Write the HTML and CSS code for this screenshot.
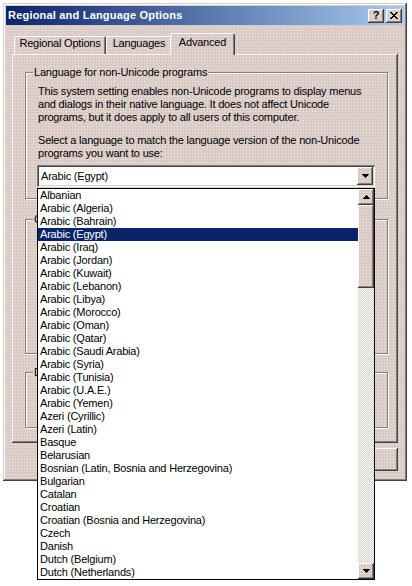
FILE: index.html
```html
<!DOCTYPE html>
<html>
<head>
<meta charset="utf-8">
<title>Regional and Language Options</title>
<link rel="stylesheet" href="styles.css">
</head>
<body>
<div class="window">
  <div class="titlebar">
    <span class="title">Regional and Language Options</span>
    <div class="cap-btns">
      <span class="cap-btn help">?</span>
      <span class="cap-btn close"><svg width="8" height="7" viewBox="0 0 8 7" shape-rendering="crispEdges"><path d="M0 0h2v1H0zM6 0h2v1H6zM1 1h2v1H1zM5 1h2v1H5zM2 2h4v1H2zM3 3h2v1H3zM2 4h4v1H2zM1 5h2v1H1zM5 5h2v1H5zM0 6h2v1H0zM6 6h2v1H6z" fill="#000"/></svg></span>
    </div>
  </div>
  <div class="dlg">
    <div class="tabs">
      <div class="tab t1">Regional Options</div>
      <div class="tab t2">Languages</div>
      <div class="tab t3">Advanced</div>
    </div>
    <div class="panel">
      <div class="group g1">
        <div class="legend">Language for non-Unicode programs</div>
        <p class="desc">This system setting enables non-Unicode programs to display menus<br>and dialogs in their native language. It does not affect Unicode<br>programs, but it does apply to all users of this computer.</p>
        <p class="desc p2">Select a language to match the language version of the non-Unicode<br>programs you want to use:</p>
        <div class="combo">
          <span class="combo-text">Arabic (Egypt)</span>
          <span class="combo-btn"><svg width="7" height="4" viewBox="0 0 7 4" shape-rendering="crispEdges"><path d="M0 0h7v1H0zM1 1h5v1H1zM2 2h3v1H2zM3 3h1v1H3z" fill="#000"/></svg></span>
        </div>
      </div>
      <div class="group g2"><div class="legend">Code page conversion tables</div></div>
      <div class="group g3"><div class="legend">Default user account settings</div></div>
    </div>
    <div class="buttons">
      <span class="btn">OK</span>
      <span class="btn">Cancel</span>
      <span class="btn">Apply</span>
    </div>
  </div>
</div>

<div class="listbox">
  <ul class="items">
    <li>Albanian</li>
    <li>Arabic (Algeria)</li>
    <li>Arabic (Bahrain)</li>
    <li class="sel">Arabic (Egypt)</li>
    <li>Arabic (Iraq)</li>
    <li>Arabic (Jordan)</li>
    <li>Arabic (Kuwait)</li>
    <li>Arabic (Lebanon)</li>
    <li>Arabic (Libya)</li>
    <li>Arabic (Morocco)</li>
    <li>Arabic (Oman)</li>
    <li>Arabic (Qatar)</li>
    <li>Arabic (Saudi Arabia)</li>
    <li>Arabic (Syria)</li>
    <li>Arabic (Tunisia)</li>
    <li>Arabic (U.A.E.)</li>
    <li>Arabic (Yemen)</li>
    <li>Azeri (Cyrillic)</li>
    <li>Azeri (Latin)</li>
    <li>Basque</li>
    <li>Belarusian</li>
    <li>Bosnian (Latin, Bosnia and Herzegovina)</li>
    <li>Bulgarian</li>
    <li>Catalan</li>
    <li>Croatian</li>
    <li>Croatian (Bosnia and Herzegovina)</li>
    <li>Czech</li>
    <li>Danish</li>
    <li>Dutch (Belgium)</li>
    <li>Dutch (Netherlands)</li>
  </ul>
  <div class="scrollbar">
    <span class="sb-btn"><svg width="7" height="4" viewBox="0 0 7 4" shape-rendering="crispEdges"><path d="M3 0h1v1H3zM2 1h3v1H2zM1 2h5v1H1zM0 3h7v1H0z" fill="#000"/></svg></span>
    <span class="sb-thumb"></span>
    <span class="sb-track"></span>
    <span class="sb-btn"><svg width="7" height="4" viewBox="0 0 7 4" shape-rendering="crispEdges"><path d="M0 0h7v1H0zM1 1h5v1H1zM2 2h3v1H2zM3 3h1v1H3z" fill="#000"/></svg></span>
  </div>
</div>
</body>
</html>
```

FILE: styles.css
```css
* { box-sizing: border-box; }

html, body {
  margin: 0;
  padding: 0;
  background: #fff;
}

body {
  width: 412px;
  height: 586px;
  overflow: hidden;
  font-family: "Liberation Sans", Arial, sans-serif;
  font-size: 11px;
  line-height: 13px;
  letter-spacing: -0.2px;
  color: #000;
}

/* dithered dialog face */
.window, .tab, .legend, .btn, .combo-btn, .sb-btn, .sb-thumb, .cap-btn {
  background-color: #dacaca;
  background-image: conic-gradient(at 1px 1px, transparent 75%, #f2eec4 0);
  background-size: 3px 3px;
  background-attachment: fixed;
}

.window {
  margin: 3px 0 0 3px;
  width: 404px;
  height: 478px;
  padding: 3px;
  display: flex;
  flex-direction: column;
  box-shadow: inset -1px -1px #404040, inset 1px 1px #d4d0c8, inset -2px -2px #808080, inset 2px 2px #fff;
}

.titlebar {
  height: 19px;
  flex: none;
  display: flex;
  align-items: center;
  justify-content: space-between;
  padding: 0 2px;
  background: linear-gradient(90deg, #0a246a, #a6caf0);
}

.title {
  color: #fff;
  font-weight: bold;
  letter-spacing: 0.2px;
}

.cap-btns {
  display: flex;
  gap: 2px;
}

.cap-btn {
  width: 16px;
  height: 14px;
  display: flex;
  align-items: center;
  justify-content: center;
  font-weight: bold;
  letter-spacing: 0;
  font-size: 11px;
  box-shadow: inset -1px -1px #404040, inset 1px 1px #fff, inset -2px -2px #808080;
}

.dlg {
  flex: 1;
  display: flex;
  flex-direction: column;
  padding: 8px 6px 0;
}

.tabs {
  height: 21px;
  display: flex;
  align-items: flex-end;
  padding-left: 2px;
}

.tab {
  height: 18px;
  padding-top: 1px;
  text-align: center;
  border-radius: 2px 2px 0 0;
  box-shadow: inset 1px 1px #fff, inset -1px 0 #404040, inset -2px 0 #808080;
}

.t1 { width: 92px; }
.t2 { width: 66px; }
.t3 {
  width: 65px;
  height: 22px;
  margin: 0 0 -1px -2px;
  padding-top: 3px;
  position: relative;
  z-index: 1;
}

.panel {
  height: 389px;
  flex: none;
  padding: 18px 10px 0 13px;
  box-shadow: inset -1px -1px #404040, inset 1px 1px #fff, inset -2px -2px #808080;
}

.group {
  border: 1px solid #808080;
  box-shadow: inset 1px 1px #fff, 1px 1px #fff;
  padding: 0 11px;
}

.legend {
  width: fit-content;
  margin: -7px 0 0 -4px;
  padding: 0 1px;
  white-space: nowrap;
}

.g1 { height: 127px; }
.g2 { height: 135px; margin-top: 20px; }
.g3 { height: 56px; margin-top: 18px; }

.desc {
  margin: 6px 0 0 1px;
  white-space: nowrap;
}

.desc.p2 { margin-top: 10px; }

.combo {
  margin-top: 5px;
  width: 338px;
  height: 22px;
  padding: 2px;
  display: flex;
  align-items: center;
  background: #fff;
  box-shadow: inset 1px 1px #808080, inset -1px -1px #fff, inset 2px 2px #404040, inset -2px -2px #d4d0c8;
}

.combo-text {
  flex: 1;
  padding-left: 2px;
}

.combo-btn {
  width: 16px;
  height: 18px;
  display: flex;
  align-items: center;
  justify-content: center;
  box-shadow: inset -1px -1px #404040, inset 1px 1px #fff, inset -2px -2px #808080;
}

.buttons {
  display: flex;
  justify-content: flex-end;
  gap: 6px;
  margin-top: 5px;
}

.btn {
  width: 75px;
  height: 23px;
  display: flex;
  align-items: center;
  justify-content: center;
  box-shadow: inset -1px -1px #404040, inset 1px 1px #fff, inset -2px -2px #808080;
}

/* open drop-down list, floating over the dialog */
.listbox {
  position: absolute;
  left: 37px;
  top: 188px;
  width: 338px;
  height: 392px;
  border: 1px solid #000;
  background: #fff;
  display: flex;
}

.items {
  list-style: none;
  margin: 0;
  padding: 0;
  flex: 1;
}

.items li {
  height: 13px;
  padding-left: 2px;
  white-space: nowrap;
}

.items li.sel {
  background: #0a246a;
  color: #fff;
}

.scrollbar {
  width: 16px;
  display: flex;
  flex-direction: column;
}

.sb-btn {
  height: 16px;
  flex: none;
  display: flex;
  align-items: center;
  justify-content: center;
  box-shadow: inset -1px -1px #404040, inset 1px 1px #fff, inset -2px -2px #808080;
}

.sb-thumb {
  height: 83px;
  flex: none;
  box-shadow: inset -1px -1px #404040, inset 1px 1px #fff, inset -2px -2px #808080;
}

.sb-track {
  flex: 1;
  background: repeating-conic-gradient(#d4d0c8 0 25%, #fff 0 50%) 0 0 / 2px 2px;
}
```
